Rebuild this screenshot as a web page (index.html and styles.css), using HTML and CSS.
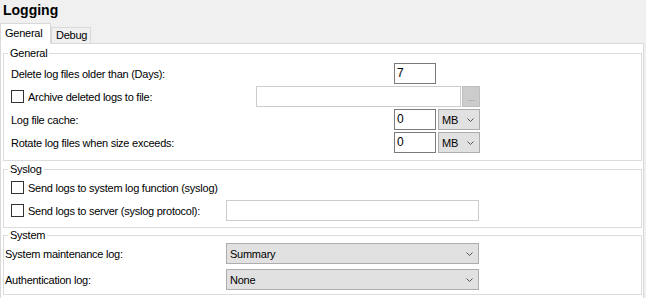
FILE: index.html
```html
<!DOCTYPE html>
<html lang="en">
<head>
    <meta charset="utf-8">
    <title>Logging</title>
    <link rel="stylesheet" href="styles.css">
</head>
<body>
<div class="title">Logging</div>
<div class="tabs">
    <div class="tab active">General</div>
    <div class="tab">Debug</div>
    <div class="tab-fill"></div>
</div>
<div class="page">
    <fieldset class="group general">
        <legend>General</legend>
        <div class="rows">
            <div class="row">
                <label class="lbl">Delete log files older than (Days):</label>
                <input class="num" type="text" value="7">
            </div>
            <div class="row">
                <label class="check archive"><span class="box"></span>Archive deleted logs to file:</label>
                <input class="path" type="text" disabled>
                <span class="browse">...</span>
            </div>
            <div class="row">
                <label class="lbl">Log file cache:</label>
                <input class="num" type="text" value="0">
                <div class="combo unit">
                    <span>MB</span>
                    <svg width="7" height="4" viewBox="0 0 7 4"><polyline points="0.5,0.5 3.5,3.5 6.5,0.5" fill="none" stroke="#555" stroke-width="1"/></svg>
                </div>
            </div>
            <div class="row">
                <label class="lbl">Rotate log files when size exceeds:</label>
                <input class="num" type="text" value="0">
                <div class="combo unit">
                    <span>MB</span>
                    <svg width="7" height="4" viewBox="0 0 7 4"><polyline points="0.5,0.5 3.5,3.5 6.5,0.5" fill="none" stroke="#555" stroke-width="1"/></svg>
                </div>
            </div>
        </div>
    </fieldset>
    <fieldset class="group syslog">
        <legend>Syslog</legend>
        <div class="rows">
            <div class="row">
                <label class="check"><span class="box"></span>Send logs to system log function (syslog)</label>
            </div>
            <div class="row">
                <label class="check server"><span class="box"></span>Send logs to server (syslog protocol):</label>
                <input class="host" type="text" disabled>
            </div>
        </div>
    </fieldset>
    <fieldset class="group system">
        <legend>System</legend>
        <div class="rows">
            <div class="row">
                <label class="lbl">System maintenance log:</label>
                <div class="combo wide">
                    <span>Summary</span>
                    <svg width="7" height="4" viewBox="0 0 7 4"><polyline points="0.5,0.5 3.5,3.5 6.5,0.5" fill="none" stroke="#555" stroke-width="1"/></svg>
                </div>
            </div>
            <div class="row">
                <label class="lbl">Authentication log:</label>
                <div class="combo wide">
                    <span>None</span>
                    <svg width="7" height="4" viewBox="0 0 7 4"><polyline points="0.5,0.5 3.5,3.5 6.5,0.5" fill="none" stroke="#555" stroke-width="1"/></svg>
                </div>
            </div>
        </div>
    </fieldset>
</div>
</body>
</html>
```

FILE: styles.css
```css
*{
    margin:0;
    padding:0;
    box-sizing:border-box;
}
body{
    width:646px;
    height:298px;
    overflow:hidden;
    background:#f0f0f0;
    font-family:"Liberation Sans", Arial, sans-serif;
    font-size:11px;
    letter-spacing:-0.25px;
    color:#000;
}
.title{
    height:23px;
    padding:1px 0 0 3px;
    font-size:14px;
    line-height:18px;
    font-weight:bold;
    letter-spacing:0;
}
.tabs{
    display:flex;
    align-items:flex-end;
    width:644px;
    height:21px;
}
.tab{
    width:40px;
    height:17px;
    padding:1px 0 0 4px;
    line-height:13px;
    border:1px solid #d9d9d9;
}
.tab.active{
    width:51px;
    height:21px;
    padding-top:3px;
    background:#fff;
    border-bottom-color:#fff;
}
.tab-fill{
    flex:1;
    border-bottom:1px solid #d9d9d9;
}
.page{
    width:644px;
    height:260px;
    background:#fff;
    border:1px solid #d9d9d9;
    border-top:none;
    padding:3px 1px 0 2px;
}
.group{
    border:1px solid #dcdcdc;
    padding:0 1px;
}
.group legend{
    margin-left:3px;
    padding:0 2px;
    line-height:13px;
}
.rows{
    display:flex;
    flex-direction:column;
    gap:2px;
    padding-left:6px;
}
.general .rows{
    padding-top:3px;
    padding-bottom:7px;
}
.syslog{
    margin-top:2px;
}
.syslog .rows{
    padding-top:1px;
    padding-bottom:6px;
}
.system{
    margin-top:1px;
}
.system .rows{
    padding:1px 0 4px 0;
    gap:5px;
}
.row{
    display:flex;
    align-items:center;
    height:21px;
}
.lbl{
    width:383px;
}
.system .lbl{
    width:221px;
}
.check{
    display:flex;
    align-items:center;
}
.check .box{
    width:13px;
    height:13px;
    margin-right:4px;
    background:#fff;
    border:1px solid #333;
}
.check.archive{
    width:245px;
}
.check.server{
    width:215px;
}
input{
    height:21px;
    padding:0 2px 2px;
    font-family:"Liberation Sans", Arial, sans-serif;
    font-size:12px;
    color:#000;
    background:#fff;
    border:1px solid #7a7a7a;
    outline:none;
}
input.num{
    width:42px;
}
input.path{
    width:205px;
    border-color:#cccccc;
}
input.host{
    width:253px;
    border-color:#cccccc;
}
.browse{
    width:18px;
    height:21px;
    margin-left:1px;
    padding-top:6px;
    text-align:center;
    font-size:9px;
    letter-spacing:0;
    color:#8d8d8d;
    background:#cccccc;
    border:1px solid #bfbfbf;
}
.combo{
    display:flex;
    align-items:center;
    justify-content:space-between;
    height:21px;
    padding:0 5px 0 3px;
    background:#e1e1e1;
    border:1px solid #adadad;
}
.combo.unit{
    width:42px;
    margin-left:2px;
}
.combo.wide{
    width:253px;
}
```
